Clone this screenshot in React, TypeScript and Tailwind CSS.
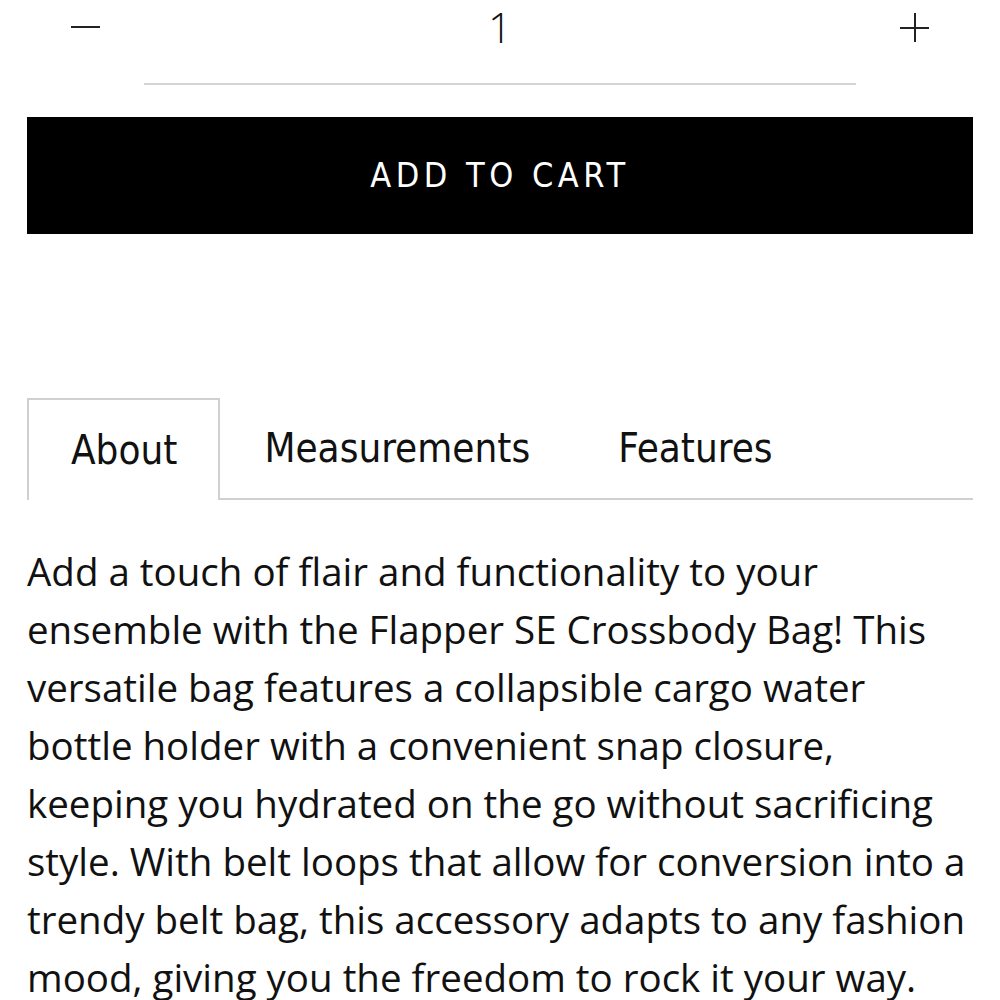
const tabs = ['About', 'Measurements', 'Features'];

const aboutLines = [
  'Add a touch of flair and functionality to your',
  'ensemble with the Flapper SE Crossbody Bag! This',
  'versatile bag features a collapsible cargo water',
  'bottle holder with a convenient snap closure,',
  'keeping you hydrated on the go without sacrificing',
  'style. With belt loops that allow for conversion into a',
  'trendy belt bag, this accessory adapts to any fashion',
  'mood, giving you the freedom to rock it your way.',
];

export default function App() {
  return (
    <div className="w-full h-[1000px] overflow-hidden bg-white px-[27px] text-[#111]">
      {/* quantity */}
      <div className="flex h-[85px]">
        <button className="w-[117px] h-[54px] flex items-center justify-center">
          <span className="block w-[29px] h-[2px] bg-[#222]" />
        </button>
        <div className="flex-1 border-b-2 border-[#d4d4d4] flex justify-center pt-[1px]">
          <span className="font-['Open_Sans',sans-serif] font-light text-[42px] leading-[52px]">1</span>
        </div>
        <button className="w-[117px] h-[54px] flex items-center justify-center">
          <span className="relative block w-[29px] h-[29px]">
            <span className="absolute left-0 top-[14px] w-[29px] h-[2px] bg-[#222]" />
            <span className="absolute top-0 left-[14px] w-[2px] h-[29px] bg-[#222]" />
          </span>
        </button>
      </div>

      <button className="mt-[32px] w-full h-[117px] bg-black text-white flex items-center justify-center font-['DejaVu_Sans_Condensed',sans-serif] text-[34px] tracking-[4.5px]">
        ADD TO CART
      </button>

      {/* tabs */}
      <div className="mt-[164px] flex font-['DejaVu_Sans_Condensed',sans-serif] text-[40px]">
        {tabs.map((t, i) => (
          <div
            key={t}
            className={
              i === 0
                ? 'h-[102px] pl-[42px] pr-[41px] flex items-center border-2 border-b-0 border-[#d0d0d0]'
                : 'h-[102px] px-[44px] flex items-center border-b-2 border-[#d0d0d0]'
            }
          >
            {t}
          </div>
        ))}
        <div className="flex-1 border-b-2 border-[#d0d0d0]" />
      </div>

      <p className="mt-[42px] font-['Open_Sans',sans-serif] text-[38.5px] leading-[58px] whitespace-nowrap">
        {aboutLines.map((l) => (
          <span key={l} className="block">
            {l}
          </span>
        ))}
      </p>
    </div>
  );
}
